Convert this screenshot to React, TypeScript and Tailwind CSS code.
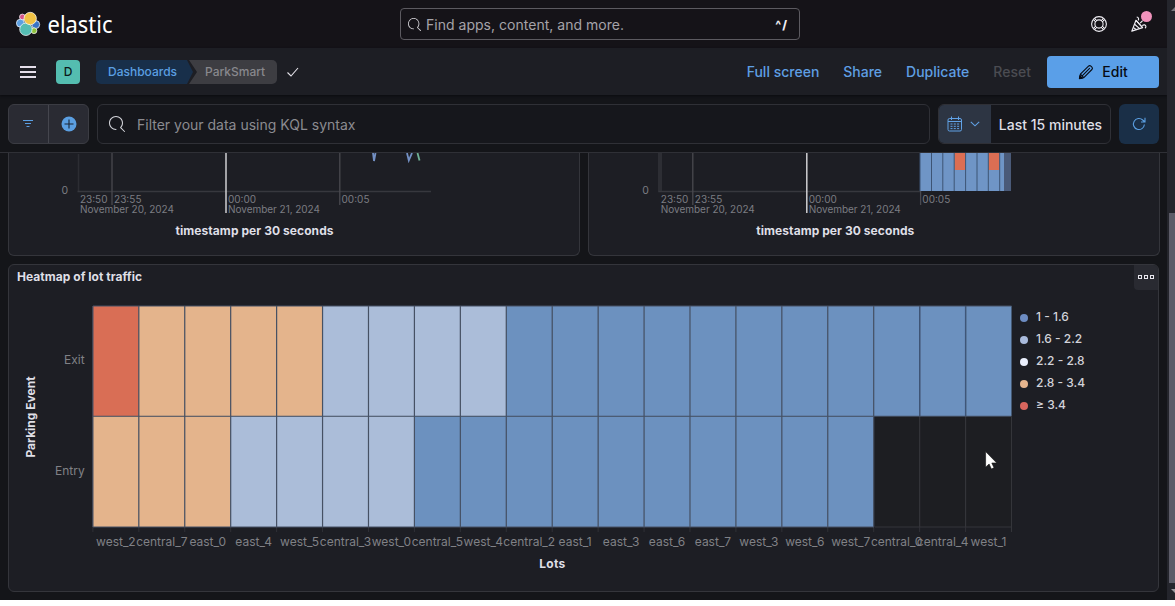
import type { ReactNode } from "react";

const SEARCH_PATH =
  "M11.271 11.978l3.872 3.873a.502.502 0 00.708 0 .502.502 0 000-.708l-3.565-3.564c2.38-2.747 2.267-6.923-.342-9.532-2.73-2.73-7.17-2.73-9.898 0-2.728 2.729-2.728 7.17 0 9.9a6.955 6.955 0 004.949 2.05.5.5 0 000-1 5.96 5.96 0 01-4.242-1.757 6.01 6.01 0 010-8.486 6.004 6.004 0 018.484 0 6.01 6.01 0 010 8.486.5.5 0 000 .738z";

function SearchIcon({ className }: { className: string }) {
  return (
    <svg viewBox="0 0 16 16" className={className} fill="currentColor">
      <path d={SEARCH_PATH} />
    </svg>
  );
}

function ElasticLogo() {
  return (
    <svg width="100" height="32" viewBox="0 0 100 32" className="block">
      <g stroke="#fff" strokeWidth="0.7">
        <circle cx="6.4" cy="9" r="2.9" fill="#d6558c" />
        <circle cx="4.4" cy="15.2" r="4" fill="#5b9fe0" />
        <circle cx="19.7" cy="16.6" r="4" fill="#3a73c4" />
        <circle cx="18" cy="22.7" r="2.9" fill="#8fc23f" />
        <circle cx="9.9" cy="21.3" r="6.2" fill="#54bcb2" />
        <circle cx="14.2" cy="10.5" r="6.2" fill="#f1c244" />
      </g>
      <text x="31.5" y="24.8" fill="#fff" fontSize="23" textLength="65" lengthAdjust="spacingAndGlyphs" className="font-['Noto_Sans',sans-serif]">
        elastic
      </text>
    </svg>
  );
}

function HelpIcon() {
  return (
    <svg width="16" height="16" viewBox="0 0 16 16" fill="none" stroke="#f1eff5">
      <circle cx="8" cy="8" r="7.4" strokeWidth="1.1" />
      <circle cx="8" cy="8" r="4.1" strokeWidth="1.1" />
      <path d="M3 3l2.300 2.300M13 3l-2.300 2.300M3 13l2.300-2.300M13 13l-2.300-2.300" strokeWidth="2.600" />
      <path d="M3.300 3.300l1.900 1.900M12.700 3.300l-1.900 1.900M3.300 12.700l1.900-1.900M12.700 12.700l-1.900-1.900" stroke="#151318" strokeWidth="0.900" />
    </svg>
  );
}

function PartyIcon() {
  return (
    <svg width="16" height="16" viewBox="0 0 16 16" fill="none" stroke="#f1eff5" strokeWidth="1.15" strokeLinejoin="round">
      <path d="M5 4.3L.8 15.1l10.8-3.5z" />
      <path d="M3.6 8.2l5 4.4M2.3 11.5l3.2 2.2M5 4.3l6.6 7.3" />
      <path d="M5.7 1c2 .4 2.3 2 1.5 3.4M9.2 7.2l2.4-2.6M11.2 9.6c1.6-1.3 3.500-.9 3.700.7.1.9-.3 1.600-1 1.800" />
    </svg>
  );
}

function PencilIcon() {
  return (
    <svg width="16" height="16" viewBox="0 0 16 16" fill="none" stroke="#070b14" strokeWidth="1.1" strokeLinejoin="round">
      <path d="M1.6 14.4l.8-4.2 8.1-8.1c.7-.7 1.7-.7 2.4 0l1 1c.7.7.7 1.7 0 2.4l-8.100 8.100z" />
      <path d="M4.200 11.800l7.600-7.600M2.400 10.200l3.400 3.400" />
      <path d="M1.400 14.600l.5-2.900 2.400 2.400z" fill="#070b14" />
    </svg>
  );
}

function CalendarIcon() {
  return (
    <svg width="16" height="16" viewBox="0 0 16 16" fill="none" stroke="#61a2e6">
      <rect x="1" y="2.500" width="13.500" height="12.500" rx="1.500" />
      <path d="M1 5.500h13.500M4.500.5v3.500M11.500.5v3.500" />
      <path d="M3.500 8h2M6.800 8h2M10.100 8h2M3.500 10.300h2M6.800 10.300h2M10.100 10.300h2M3.500 12.600h2M6.800 12.600h2M10.100 12.600h2" />
    </svg>
  );
}

function ToolbarLink({ children }: { children: ReactNode }) {
  return <a className="text-[14px] leading-5 font-medium text-[#5f9fe3]">{children}</a>;
}

function Header() {
  return (
    <header className="flex h-12 shrink-0 items-center bg-[#151318]">
      <div className="w-[400px] pl-4">
        <ElasticLogo />
      </div>
      <div className="flex h-8 w-[400px] items-center rounded border border-[#5c5a60] bg-[#151318] pr-[11px] pl-[7px]">
        <SearchIcon className="mr-[5px] size-[13px] text-[#d5d3d8]" />
        <span className="flex-1 pt-[2px] text-[14px] leading-5 tracking-[0.02px] text-[#a5a3a9]">Find apps, content, and more.</span>
        <span className="pt-px text-[12px] font-extrabold tracking-[1px] text-[#f0eef4]">^/</span>
      </div>
      <div className="flex flex-1 items-center justify-end pr-5">
        <HelpIcon />
        <div className="relative ml-6">
          <PartyIcon />
          <span className="absolute -top-[5px] right-[-5px] size-[11px] rounded-full bg-[#f092bb]" />
        </div>
      </div>
    </header>
  );
}

function NavBar() {
  return (
    <div className="flex h-[47px] shrink-0 items-center bg-[#1d1e24] shadow-[0_1px_2px_#0b0c10]">
      <div className="ml-5 flex w-4 flex-col gap-[3px]">
        <span className="h-[2px] bg-[#e4deea]" />
        <span className="h-[2px] bg-[#e4deea]" />
        <span className="h-[2px] bg-[#e4deea]" />
      </div>
      <div className="ml-5 flex size-6 items-center justify-center rounded-[4px] bg-[#54bdb0] text-[12px] font-medium text-[#0b1a1a]">D</div>
      <div className="mt-px ml-4 flex h-6 text-[12px] font-medium">
        <div className="flex w-[97px] items-center rounded-l-[5px] bg-[#182f4a] pl-3 text-[#5b9fe2] [clip-path:polygon(0_0,91px_0,100%_50%,91px_100%,0_100%)]">
          Dashboards
        </div>
        <div className="-ml-[4px] flex w-[88px] items-center rounded-r-[5px] bg-[#3d3d42] pl-4 text-[#88888d] [clip-path:polygon(0_0,100%_0,100%_100%,0_100%,8px_50%)]">
          ParkSmart
        </div>
      </div>
      <svg width="14" height="12" viewBox="0 0 14 12" fill="none" stroke="#e5e3ea" strokeWidth="1.1" className="ml-[9px]">
        <path d="M1.500 6.500l3.500 3.500 7-8" />
      </svg>
      <div className="flex flex-1 items-center justify-end gap-6 pr-2">
        <ToolbarLink>Full screen</ToolbarLink>
        <ToolbarLink>Share</ToolbarLink>
        <ToolbarLink>Duplicate</ToolbarLink>
        <a className="-mr-2 text-[14px] leading-5 font-medium text-[#4b4c52]">Reset</a>
        <button className="flex h-8 w-28 items-center justify-center gap-2 rounded bg-[#5a9fe8] text-[14px] font-medium text-[#070b14]">
          <PencilIcon />
          Edit
        </button>
      </div>
    </div>
  );
}

function FilterBar() {
  return (
    <div className="flex h-[58px] shrink-0 gap-2 border-b border-[#2f3036] px-2 pt-[9px]">
      <div className="flex h-10 w-[81px] rounded-md border border-[#3b3c43] bg-[#2a2b33]">
        <div className="flex w-10 items-center justify-center border-r border-[#45464e] pr-px">
          <svg width="12" height="10" viewBox="0 0 12 10" stroke="#5b9fe2" strokeWidth="1">
            <path d="M1 1.500h10M3 4.500h6M4.500 7.500h3" />
          </svg>
        </div>
        <div className="flex flex-1 items-center justify-center pb-px">
          <svg width="16" height="16" viewBox="0 0 16 16">
            <circle cx="8" cy="8" r="7.500" fill="#5b9fe2" />
            <path d="M8 3.500v9M3.500 8h9" stroke="#1b2534" strokeWidth="1.100" />
          </svg>
        </div>
      </div>
      <div className="flex h-10 flex-1 items-center rounded-md border border-[#2f3036] bg-[#16171c] pl-[11px]">
        <SearchIcon className="mr-3 size-4 text-[#d5d6dc]" />
        <span className="pt-px text-[14px] text-[#8b8b90]">Filter your data using KQL syntax</span>
      </div>
      <div className="flex h-10 w-[173px] overflow-hidden rounded-md border border-[#2f3036] bg-[#16171c]">
        <div className="flex w-[52px] items-center gap-[7px] bg-[#2d3543] pl-2">
          <CalendarIcon />
          <svg width="10" height="6" viewBox="0 0 10 6" fill="none" stroke="#61a2e6" strokeWidth="1.100">
            <path d="M.8.8L5 4.800 9.200.8" />
          </svg>
        </div>
        <div className="flex flex-1 items-center justify-center pt-px text-[14px] font-medium whitespace-nowrap text-[#dfdfe6]">Last 15 minutes</div>
      </div>
      <div className="flex size-10 items-center justify-center rounded-md bg-[#1a2f47]">
        <svg width="14" height="14" viewBox="0 0 14 14" fill="none" stroke="#5b9fe2" strokeWidth="1.100">
          <path d="M12.400 7.500A5.500 5.500 0 1 1 10.700 3L13 5M13 .8V5H9" />
        </svg>
      </div>
    </div>
  );
}

const AXIS_TEXT = "#7b7c82";

function TimeAxis({ ox, end }: { ox: number; end: number }) {
  return (
    <g>
      <path d={`M${ox - 1} 38.500H${end}`} stroke="#37383e" strokeWidth="1.500" />
      <path d={`M${ox + 33.500} 0V52M${ox + 261.300} 0V52`} stroke="#49494f" strokeWidth="1.300" />
      <path d={`M${ox + 147.500} 0V60`} stroke="#cfcfd2" strokeWidth="1.500" />
      <g fill={AXIS_TEXT} fontSize="10">
        <text x={ox - 17} y="41.300" fontSize="10.500">0</text>
        <text x={ox + 1.500} y="50.300" textLength="27.500">23:50</text>
        <text x={ox + 35.500} y="50.300" textLength="27.500">23:55</text>
        <text x={ox + 149.500} y="50.300" textLength="28">00:00</text>
        <text x={ox + 263} y="50.300" textLength="28">00:05</text>
        <text x={ox + 1.500} y="60" textLength="94">November 20, 2024</text>
        <text x={ox + 149.500} y="60" textLength="92">November 21, 2024</text>
      </g>
      <text x={ox + 97} y="82" fill="#dfdfe6" fontSize="12" fontWeight="700" textLength="158">
        timestamp per 30 seconds
      </text>
    </g>
  );
}

function LinePanel() {
  return (
    <section className="h-[103px] w-[572px] rounded-b-md border border-t-0 border-[#34353b] bg-[#1d1e24]">
      <svg width="570" height="102" viewBox="0 0 570 102" className="block">
        <path d="M69.500 1V38" stroke="#2c2d33" strokeWidth="1.500" />
        <TimeAxis ox={69.500} end={422} />
        <g fill="none" strokeWidth="1.800">
          <path d="M364 0l1 8 1.500-8M398 0l1.800 7.500L403 0" stroke="#7390c4" />
          <path d="M408.500 0l2 7.500" stroke="#70b296" />
        </g>
      </svg>
    </section>
  );
}

function BarPanel() {
  const bars = [331, 342.500, 353.800, 365.200, 376.600, 388, 399.300, 410.700];
  return (
    <section className="h-[103px] w-[572px] rounded-b-md border border-t-0 border-[#34353b] bg-[#1d1e24]">
      <svg width="570" height="102" viewBox="0 0 570 102" className="block">
        <rect x="69" y="0" width="4" height="38.500" fill="#2d2e34" />
        <TimeAxis ox={70.300} end={332} />
        <rect x="331" y="0" width="91" height="38" fill="#6f95c6" />
        <rect x="415" y="0" width="7" height="38" fill="#4a5a78" />
        <rect x="365.500" y="0" width="11" height="17" fill="#dc6e53" />
        <rect x="399.500" y="0" width="11" height="17" fill="#dc6e53" />
        <g stroke="#3d5474" strokeWidth="1">
          {bars.map((x) => (
            <path key={x} d={`M${x} 0V38`} />
          ))}
        </g>
      </svg>
    </section>
  );
}

const LOTS = ["west_2", "central_7", "east_0", "east_4", "west_5", "central_3", "west_0", "central_5", "west_4", "central_2", "east_1", "east_3", "east_6", "east_7", "west_3", "west_6", "west_7", "central_0", "central_4", "west_1"];

const BLUE = "#6c91bf";
const PALE = "#abbdd9";
const ORANGE = "#e4b48c";
const RED = "#d96e55";

const exitColor = (i: number) => (i < 1 ? RED : i < 5 ? ORANGE : i < 9 ? PALE : BLUE);
const entryColor = (i: number) => (i < 3 ? ORANGE : i < 7 ? PALE : i < 17 ? BLUE : "#1d1e22");

const LEGEND = [
  { label: "1 - 1.6", color: "#6d8cc2" },
  { label: "1.6 - 2.2", color: "#a9badb" },
  { label: "2.2 - 2.8", color: "#eaeffc" },
  { label: "2.8 - 3.4", color: "#e5b48d" },
  { label: "≥ 3.4", color: "#d8655d" },
];

function Heatmap() {
  const step = 45.93;
  return (
    <svg width="1004" height="300" viewBox="0 0 1004 300" className="block shrink-0">
      {LOTS.map((lot, i) => {
        const x = 83.900 + i * step;
        return (
          <g key={lot}>
            <rect x={x} y="16" width={step} height="110.200" fill={exitColor(i)} />
            <rect x={x} y="126.200" width={step} height="110.800" fill={entryColor(i)} />
            <path d={`M${x} 237V242`} stroke="#303137" />
            <path d={`M${x} 16V237`} stroke={i > 17 ? "#34353a" : "#465164"} strokeWidth="1.200" />
            {i > 17 && <path d={`M${x} 16V126`} stroke="#3f5678" strokeWidth="1.200" />}
            <text x={x + step / 2} y="255.700" textAnchor="middle" fontSize="12" fill="#808186">
              {lot}
            </text>
          </g>
        );
      })}
      <path d="M84 126.300H1002.500M84 16H1002.500M84 237H865" stroke="#465164" strokeWidth="1.100" fill="none" />
      <path d="M866 237H1002M1002.500 126V242" stroke="#34353a" fill="none" />
      <g fontSize="12" fill="#808186" textAnchor="end">
        <text x="75.700" y="74">Exit</text>
        <text x="75.700" y="185">Entry</text>
      </g>
      <g fontSize="12" fontWeight="700" fill="#dfdfe6" textAnchor="middle">
        <text transform="translate(26 127) rotate(-90)">Parking Event</text>
        <text x="543.300" y="278" textLength="26">Lots</text>
      </g>
    </svg>
  );
}

function HeatmapPanel() {
  return (
    <section className="mx-2 mt-2 h-[328px] shrink-0 overflow-hidden rounded-md border border-[#34353b] bg-[#1d1e24]">
      <div className="flex h-[25px] items-center justify-between pl-2">
        <h2 className="pb-[2px] text-[12px] font-bold tracking-[0.04px] text-[#dfdfe6]">Heatmap of lot traffic</h2>
        <div className="flex h-[25px] w-6 items-center justify-center gap-[2px] rounded-bl bg-[#292a31] pb-[2px]">
          <span className="size-1 border border-[#e8e6ee]" />
          <span className="size-1 border border-[#e8e6ee]" />
          <span className="size-1 border border-[#e8e6ee]" />
        </div>
      </div>
      <div className="flex">
        <Heatmap />
        <ul className="ml-[7px] pt-4">
          {LEGEND.map((item) => (
            <li key={item.label} className="flex h-[22px] items-center text-[12px] font-medium whitespace-nowrap text-[#d3d3da]">
              <span className="mt-[2px] mr-2 size-2 rounded-full" style={{ background: item.color }} />
              {item.label}
            </li>
          ))}
        </ul>
      </div>
    </section>
  );
}

function ScrollBar() {
  return (
    <div className="flex h-[600px] w-2 shrink-0 flex-col items-end overflow-hidden bg-[#24252c]">
      <svg width="4" height="213" viewBox="0 0 4 213" className="block shrink-0">
        <path d="M0 11L4 7v4z" fill="#77777d" />
      </svg>
      <div className="h-[370px] w-[6px] shrink-0 bg-[#5c5c68]" />
      <svg width="4" height="17" viewBox="0 0 4 17" className="block shrink-0">
        <path d="M0 6h4v4z" fill="#9a9a9f" />
      </svg>
    </div>
  );
}

export default function App() {
  return (
    <div className="flex h-[600px] w-[1175px] overflow-hidden bg-[#141519] font-['Inter',sans-serif]">
      <div className="flex w-[1167px] flex-col">
        <Header />
        <NavBar />
        <FilterBar />
        <div className="flex shrink-0 gap-2 px-2">
          <LinePanel />
          <BarPanel />
        </div>
        <HeatmapPanel />
      </div>
      <ScrollBar />
      <svg width="13" height="19" viewBox="0 0 13 19" className="absolute top-[451px] left-[985px]">
        <path d="M.6.6v15.600l3.500-3.200 2.300 5 2.600-1.200-2.200-4.800h5z" fill="#fff" stroke="#111" strokeWidth=".6" />
      </svg>
    </div>
  );
}
